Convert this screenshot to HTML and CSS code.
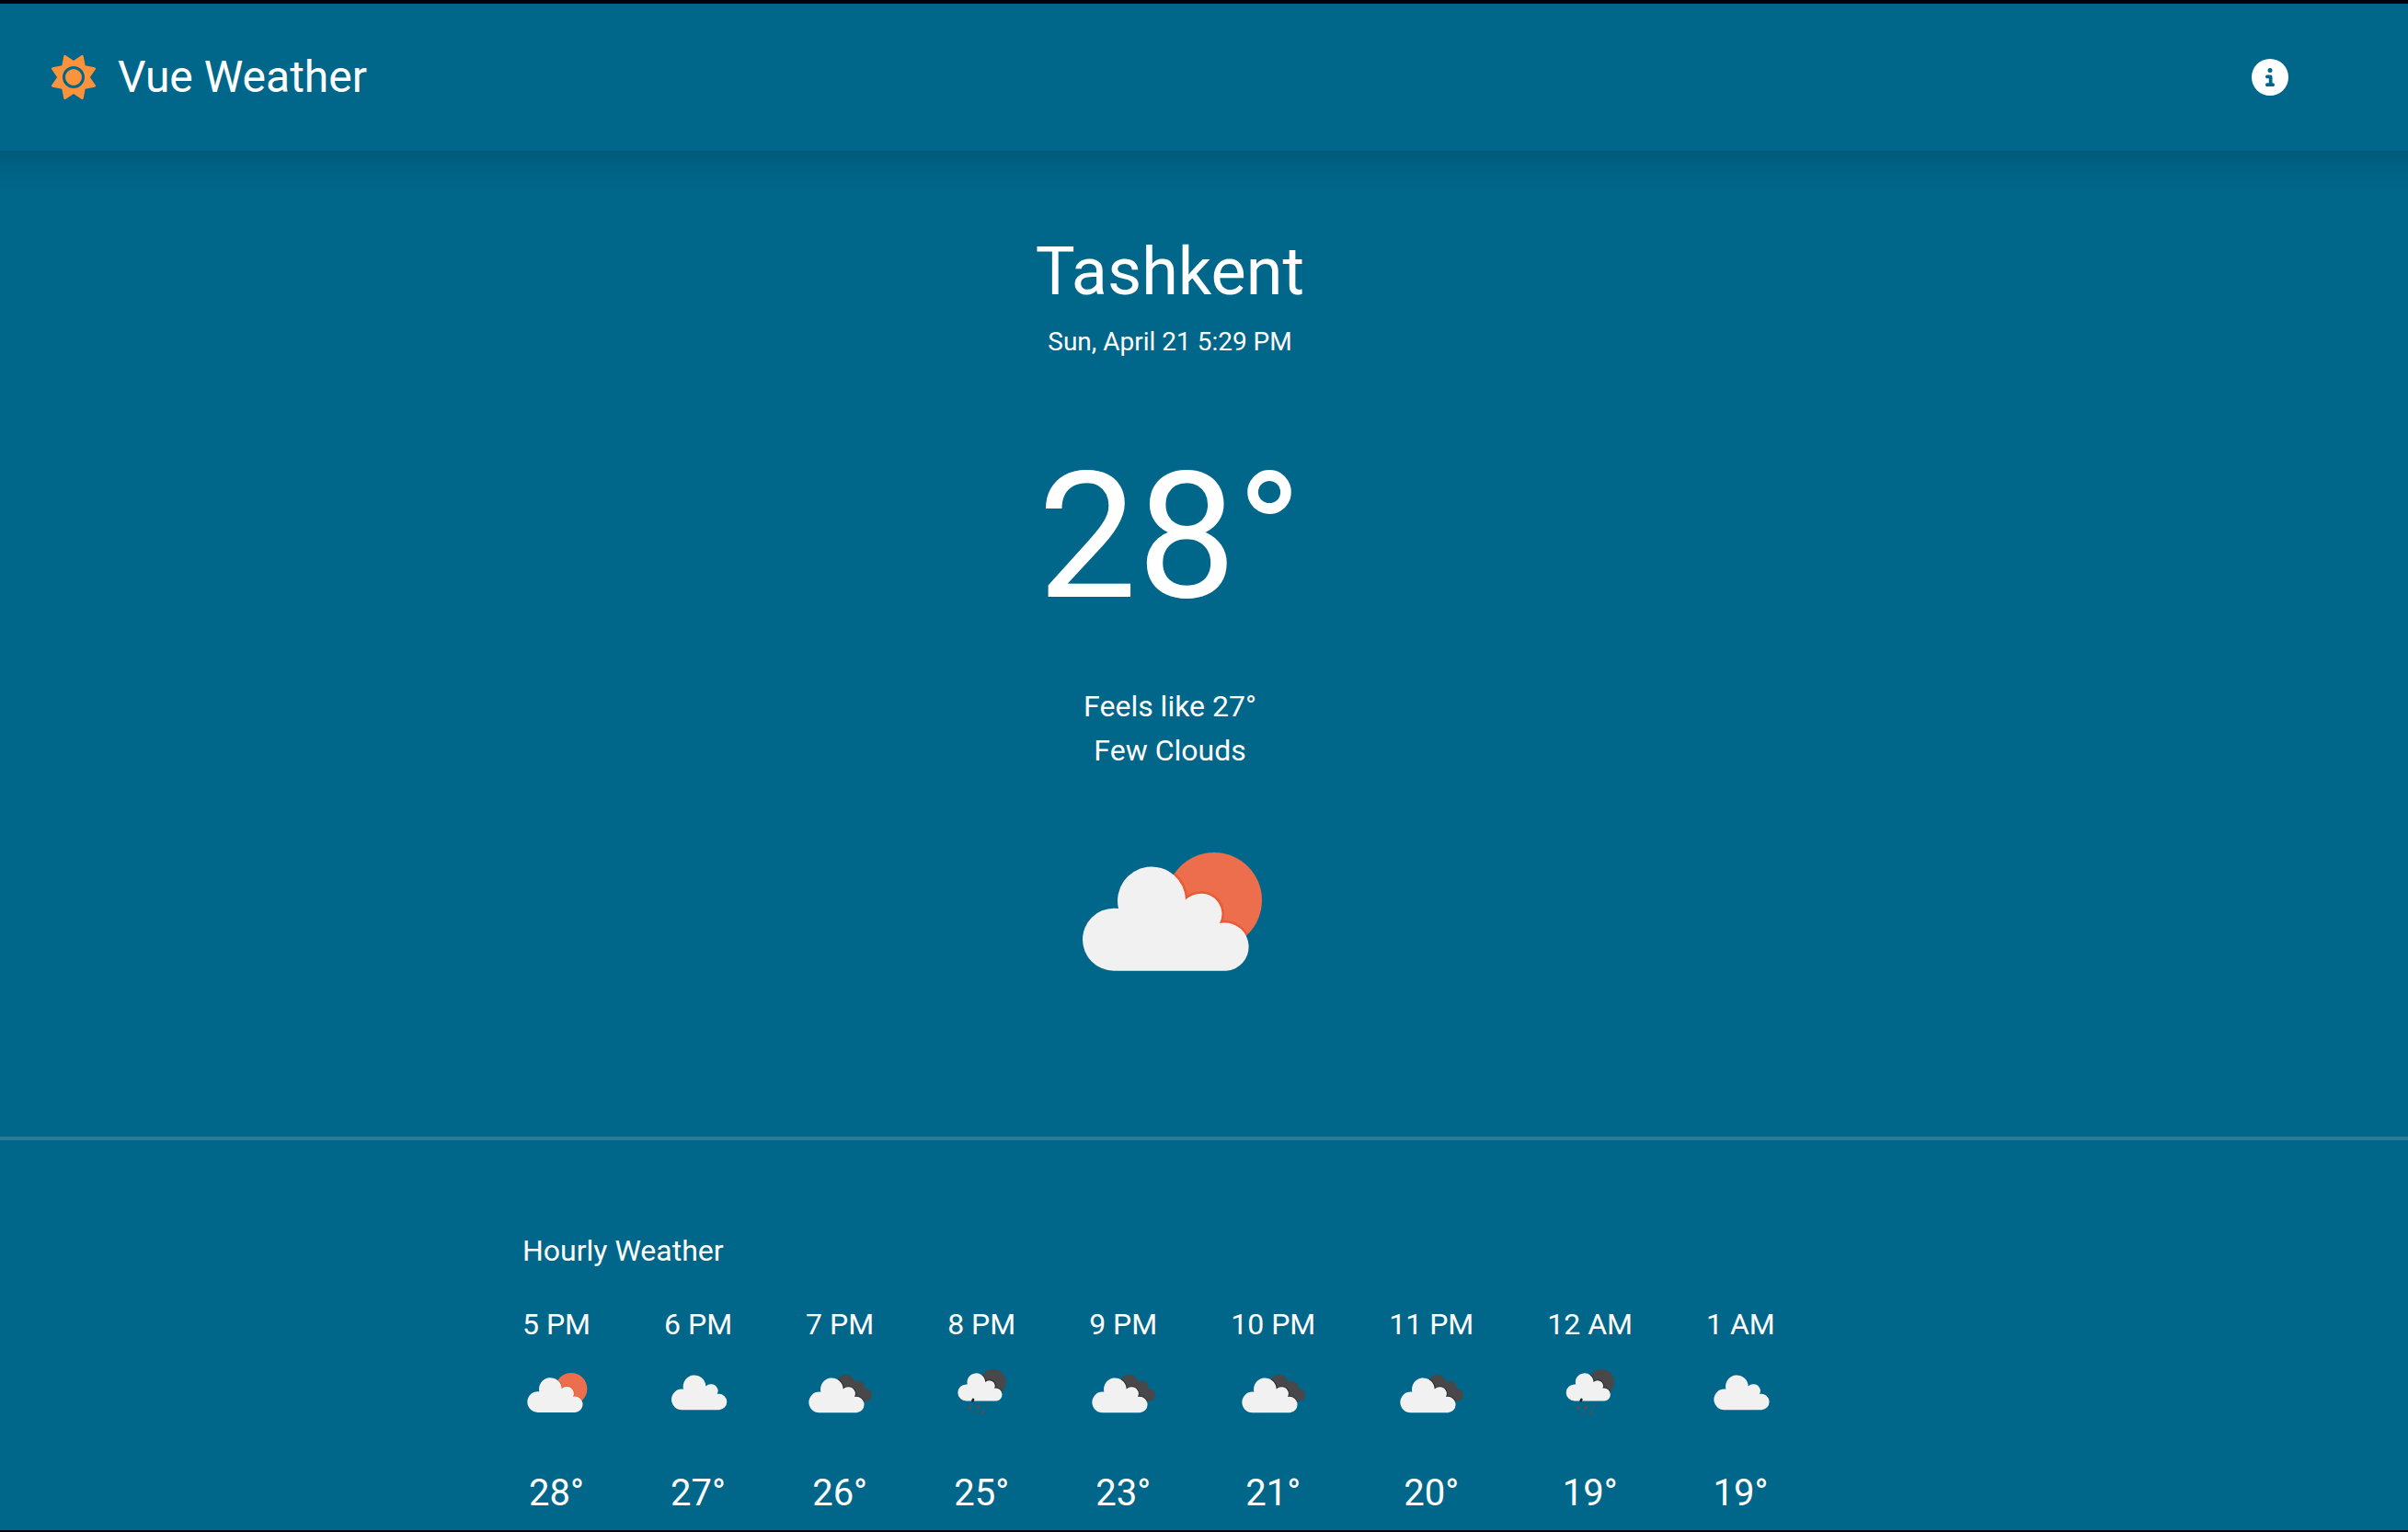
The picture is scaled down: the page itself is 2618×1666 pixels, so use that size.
FILE: index.html
```html
<!DOCTYPE html>
<html lang="en">
<head>
  <meta charset="utf-8">
  <meta name="viewport" content="width=device-width, initial-scale=1">
  <title>Vue Weather</title>
  <link rel="stylesheet" href="styles.css">
</head>
<body>
  <svg class="sprite" aria-hidden="true">
    <defs>
      <path id="cloud" d="M89 215.700A34 34 0 0 1 89 147.700Q91.500 147.600 94 148A37 37 0 1 1 167 138.500Q174 132 182 132A22 22 0 0 1 204 164Q206 163.500 208 163.500A26 26 0 0 1 211 215.700Z"/>
      <clipPath id="sun-clip"><circle cx="198" cy="139" r="52"/></clipPath>
      <path id="back-cloud" d="M140 118A30 30 0 0 1 199 116Q206 112 215 113Q231 115 233 138A21 21 0 0 1 235 180H170Z"/>
      <clipPath id="back-clip"><use href="#back-cloud"/></clipPath>
      <clipPath id="moon-clip"><circle cx="188" cy="117" r="42"/></clipPath>
    </defs>
    <symbol id="few" viewBox="0 0 300 300" preserveAspectRatio="xMidYMid slice">
      <circle cx="198" cy="139" r="52" fill="#ec6e4c"/>
      <g clip-path="url(#sun-clip)"><use href="#cloud" fill="none" stroke="#ea5a34" stroke-width="5"/></g>
      <use href="#cloud" fill="#f1f1f1"/>
    </symbol>
    <symbol id="scattered" viewBox="0 0 300 300" preserveAspectRatio="xMidYMid slice">
      <use href="#cloud" fill="#f1f1f1" transform="translate(8 -8)"/>
    </symbol>
    <symbol id="broken" viewBox="0 0 300 300" preserveAspectRatio="xMidYMid slice">
      <use href="#back-cloud" fill="#48484a"/>
      <g clip-path="url(#back-clip)"><use href="#cloud" transform="translate(-6 1)" fill="none" stroke="#222" stroke-width="5"/></g>
      <use href="#cloud" fill="#f1f1f1" transform="translate(-6 1)"/>
    </symbol>
    <symbol id="rain" viewBox="0 0 300 300" preserveAspectRatio="xMidYMid slice">
      <circle cx="188" cy="117" r="42" fill="#48484a"/>
      <g clip-path="url(#moon-clip)"><use href="#cloud" transform="translate(29 6) scale(.8)" fill="none" stroke="#222" stroke-width="6"/></g>
      <use href="#cloud" fill="#f1f1f1" transform="translate(29 6) scale(.8)"/>
      <path d="M123 174l-2 4" stroke="#222" stroke-width="8" stroke-linecap="round"/>
      <path d="M114 198l-4 6M141 195l-5 7M157 213l-3 5" stroke="#54504f" stroke-width="8" stroke-linecap="round"/>
      <path d="M168 189l-3 5M132 214l-3 4" stroke="#4b5056" stroke-width="6" stroke-linecap="round"/>
    </symbol>
  </svg>

  <div class="page">
    <header class="site-header">
      <a class="brand" href="#">
        <svg class="brand-icon" viewBox="0 0 512 512" aria-hidden="true"><path fill="currentColor" d="M361.500 1.200c5 2.100 8.600 6.600 9.600 11.900L391 121l107.900 19.800c5.300 1 9.800 4.600 11.900 9.600s1.500 10.700-1.600 15.200L446.900 256l62.300 90.300c3.100 4.500 3.700 10.200 1.600 15.200s-6.600 8.600-11.900 9.600L391 391 371.100 498.900c-1 5.300-4.600 9.800-9.600 11.900s-10.700 1.500-15.200-1.600L256 446.900l-90.300 62.300c-4.500 3.100-10.200 3.700-15.200 1.600s-8.600-6.600-9.600-11.900L121 391 13.100 371.100c-5.300-1-9.800-4.600-11.900-9.600s-1.500-10.700 1.600-15.200L65.100 256 2.800 165.700c-3.100-4.500-3.700-10.200-1.600-15.200s6.600-8.600 11.900-9.600L121 121 140.900 13.100c1-5.300 4.600-9.800 9.600-11.900s10.700-1.500 15.200 1.600L256 65.100 346.300 2.800c4.500-3.100 10.200-3.700 15.200-1.600zM160 256a96 96 0 1 1 192 0 96 96 0 1 1-192 0zm224 0a128 128 0 1 0-256 0 128 128 0 1 0 256 0z"/></svg>
        <span>Vue Weather</span>
      </a>
      <button class="info-button" type="button" aria-label="About">
        <svg class="info-icon" viewBox="0 0 512 512" aria-hidden="true"><path fill="currentColor" d="M256 512A256 256 0 1 0 256 0a256 256 0 1 0 0 512zM216 336h24V272H216c-13.300 0-24-10.700-24-24s10.700-24 24-24h48c13.300 0 24 10.700 24 24v88h8c13.300 0 24 10.700 24 24s-10.700 24-24 24H216c-13.300 0-24-10.700-24-24s10.700-24 24-24zm40-208a32 32 0 1 1 0 64 32 32 0 1 1 0-64z"/></svg>
      </button>
    </header>

    <main>
      <section class="current">
        <h1 class="city">Tashkent</h1>
        <p class="date">Sun, April 21 5:29 PM</p>
        <p class="temperature">28°</p>
        <p class="detail">Feels like 27°</p>
        <p class="detail">Few Clouds</p>
        <svg class="current-icon" role="img" aria-label="Few clouds"><use href="#few"/></svg>
      </section>

      <hr class="divider">

      <section class="hourly">
        <div class="hourly-inner">
          <h2 class="hourly-title">Hourly Weather</h2>
          <ul class="hours">
            <li class="hour"><span class="time">5 PM</span><svg class="hour-icon"><use href="#few"/></svg><span class="degrees">28°</span></li>
            <li class="hour"><span class="time">6 PM</span><svg class="hour-icon"><use href="#scattered"/></svg><span class="degrees">27°</span></li>
            <li class="hour"><span class="time">7 PM</span><svg class="hour-icon"><use href="#broken"/></svg><span class="degrees">26°</span></li>
            <li class="hour"><span class="time">8 PM</span><svg class="hour-icon"><use href="#rain"/></svg><span class="degrees">25°</span></li>
            <li class="hour"><span class="time">9 PM</span><svg class="hour-icon"><use href="#broken"/></svg><span class="degrees">23°</span></li>
            <li class="hour"><span class="time">10 PM</span><svg class="hour-icon"><use href="#broken"/></svg><span class="degrees">21°</span></li>
            <li class="hour"><span class="time">11 PM</span><svg class="hour-icon"><use href="#broken"/></svg><span class="degrees">20°</span></li>
            <li class="hour"><span class="time">12 AM</span><svg class="hour-icon"><use href="#rain"/></svg><span class="degrees">19°</span></li>
            <li class="hour"><span class="time">1 AM</span><svg class="hour-icon"><use href="#scattered"/></svg><span class="degrees">19°</span></li>
          </ul>
        </div>
      </section>
    </main>
  </div>
</body>
</html>
```
FILE: styles.css
```css
*,
*::before,
*::after {
  box-sizing: border-box;
}

body,
h1,
h2,
p,
ul {
  margin: 0;
  padding: 0;
  font-weight: 400;
}

body {
  font-family: Roboto, "Liberation Sans", sans-serif;
  font-size: 32px;
  line-height: 48px;
  color: #fff;
  background: #00668a;
}

.sprite {
  position: absolute;
  width: 0;
  height: 0;
}

.page {
  min-height: 100vh;
  border-top: 4px solid #03040f;
  border-bottom: 2px solid #03040f;
}

.site-header {
  display: flex;
  align-items: center;
  justify-content: space-between;
  padding: 48px 130px 48px 56px;
  box-shadow: 0 -16px 30px 30px rgba(0, 0, 0, 0.1), 0 -12px 12px 12px rgba(0, 0, 0, 0.1);
}

.brand {
  display: flex;
  align-items: center;
  gap: 24px;
  font-size: 48px;
  line-height: 64px;
  color: inherit;
  text-decoration: none;
}

.brand-icon {
  width: 48px;
  height: 48px;
  color: #fb923c;
}

.info-button {
  display: flex;
  padding: 0;
  border: 0;
  background: none;
  color: inherit;
  cursor: pointer;
}

.info-icon {
  width: 40px;
  height: 40px;
}

.current,
.hourly {
  padding-right: 74px;
}

.current {
  display: flex;
  flex-direction: column;
  align-items: center;
  padding-top: 92px;
  padding-bottom: 96px;
}

.city {
  margin-bottom: 16px;
  font-size: 72px;
  line-height: 80px;
}

.date {
  margin-bottom: 96px;
  font-size: 28px;
  line-height: 40px;
}

.temperature {
  margin-bottom: 64px;
  font-size: 192px;
  line-height: 192px;
}

.current-icon {
  width: 300px;
  height: 300px;
}

.divider {
  height: 4px;
  margin: 0;
  border: 0;
  background: #2b7a97;
}

.hourly-inner {
  max-width: 1536px;
  margin: 0 auto;
  padding: 96px 64px 12px;
}

.hourly-title {
  margin-bottom: 32px;
  font-size: 32px;
  line-height: 48px;
}

.hours {
  display: flex;
  gap: 80px;
  overflow-x: auto;
  list-style: none;
}

.hour {
  display: flex;
  flex: none;
  flex-direction: column;
  align-items: center;
}

.time {
  white-space: nowrap;
}

.hour-icon {
  width: 100%;
  height: 100px;
  margin-bottom: 32px;
  contain: size;
}

.degrees {
  font-size: 40px;
  line-height: 56px;
}
```
